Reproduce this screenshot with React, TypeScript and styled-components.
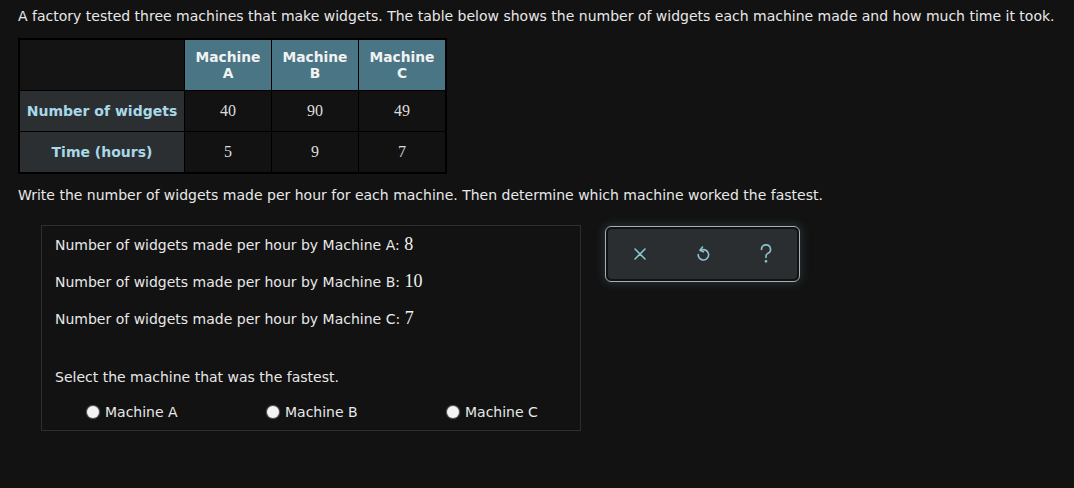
import React from 'react';
import styled, { createGlobalStyle } from 'styled-components';

const GlobalStyle = createGlobalStyle`
    html, body {
        margin: 0;
        padding: 0;
        background: #121212;
    }
    body {
        font-family: 'DejaVu Sans', Verdana, sans-serif;
        color: #e8e8e8;
    }
`;

const Page = styled.div`
    padding: 7px 18px 0 18px;
    font-size: 14px;
`;

const Para = styled.p`
    margin: 0;
    line-height: 18px;
`;

const Table = styled.table`
    margin-top: 13px;
    border-collapse: collapse;
    border: 2px solid #000;
`;

const HeadCell = styled.th<{ $blank?: boolean }>`
    width: ${p => (p.$blank ? '164px' : '86px')};
    height: 50px;
    padding: 0;
    border: 1px solid #000;
    background: ${p => (p.$blank ? '#141414' : '#4a7585')};
    color: #f2f2f2;
    font-size: 13.8px;
    font-weight: bold;
    line-height: 16px;
    text-align: center;
`;

const RowHead = styled.th`
    height: 40px;
    padding: 0;
    border: 1px solid #000;
    background: #2b2f32;
    color: #a9d8e8;
    font-size: 14px;
    font-weight: bold;
    text-align: center;
`;

const DataCell = styled.td`
    border: 1px solid #000;
    background: #121212;
    color: #dcdcdc;
    font-family: 'Liberation Serif', 'Times New Roman', serif;
    font-size: 16px;
    text-align: center;
`;

const TaskLine = styled(Para)`
    margin-top: 12px;
`;

const Work = styled.div`
    display: flex;
    align-items: flex-start;
    gap: 24px;
    margin-top: 21px;
    padding-left: 23px;
`;

const AnswerBox = styled.div`
    width: 538px;
    height: 204px;
    border: 1px solid #2e2e2e;
    display: flex;
    flex-direction: column;
`;

const RateList = styled.div`
    display: flex;
    flex-direction: column;
    gap: 19px;
    padding: 9px 0 0 13px;
`;

const RateLine = styled.div`
    height: 18px;
    line-height: 18px;
`;

const Value = styled.span`
    font-family: 'Liberation Serif', 'Times New Roman', serif;
    font-size: 18px;
    line-height: 18px;
    color: #f0f0f0;
`;

const Prompt = styled.div`
    margin-top: 41px;
    padding-left: 13px;
    line-height: 18px;
`;

const Choices = styled.div`
    display: grid;
    grid-template-columns: repeat(3, 180px);
    margin-top: 17px;
    padding-left: 45px;
`;

const Choice = styled.label`
    display: flex;
    align-items: center;
    gap: 6px;
    line-height: 18px;
`;

const Dot = styled.span`
    width: 12px;
    height: 12px;
    border-radius: 50%;
    background: #f4f4f4;
    box-shadow: 0 0 1px 1px rgba(255, 255, 255, 0.35);
`;

const Toolbar = styled.div`
    margin-top: 1px;
    width: 189px;
    height: 50px;
    border: 1px solid #a9aeb1;
    border-radius: 6px;
    box-shadow: 0 0 8px 2px rgba(70, 100, 110, 0.35);
    display: flex;
    padding: 2px;
`;

const ToolInner = styled.div`
    flex: 1;
    background: #2a2e31;
    border-radius: 4px;
    display: grid;
    grid-template-columns: repeat(3, 1fr);
    align-items: center;
    justify-items: center;
    color: #8cc2cd;
`;

const ToolButton = styled.span`
    display: flex;
    width: 22px;
    height: 22px;
    align-items: center;
    justify-content: center;
`;

const rates = [
    { name: 'A', value: '8' },
    { name: 'B', value: '10' },
    { name: 'C', value: '7' },
];

export default function App() {
    return (
        <Page>
            <GlobalStyle />
            <Para>
                A factory tested three machines that make widgets. The table below shows the number of
                widgets each machine made and how much time it took.
            </Para>
            <Table>
                <thead>
                    <tr>
                        <HeadCell $blank />
                        <HeadCell>Machine<br />A</HeadCell>
                        <HeadCell>Machine<br />B</HeadCell>
                        <HeadCell>Machine<br />C</HeadCell>
                    </tr>
                </thead>
                <tbody>
                    <tr>
                        <RowHead>Number of widgets</RowHead>
                        <DataCell>40</DataCell>
                        <DataCell>90</DataCell>
                        <DataCell>49</DataCell>
                    </tr>
                    <tr>
                        <RowHead>Time (hours)</RowHead>
                        <DataCell>5</DataCell>
                        <DataCell>9</DataCell>
                        <DataCell>7</DataCell>
                    </tr>
                </tbody>
            </Table>
            <TaskLine>
                Write the number of widgets made per hour for each machine. Then determine which machine
                worked the fastest.
            </TaskLine>
            <Work>
                <AnswerBox>
                    <RateList>
                        {rates.map(r => (
                            <RateLine key={r.name}>
                                Number of widgets made per hour by Machine {r.name}: <Value>{r.value}</Value>
                            </RateLine>
                        ))}
                    </RateList>
                    <Prompt>Select the machine that was the fastest.</Prompt>
                    <Choices>
                        {rates.map(r => (
                            <Choice key={r.name}>
                                <Dot />
                                Machine {r.name}
                            </Choice>
                        ))}
                    </Choices>
                </AnswerBox>
                <Toolbar>
                    <ToolInner>
                        <ToolButton>
                            <svg width="14" height="14" viewBox="0 0 14 14" fill="none" stroke="currentColor" strokeWidth="1.6" strokeLinecap="round">
                                <path d="M2 2 L12 12 M12 2 L2 12" />
                            </svg>
                        </ToolButton>
                        <ToolButton>
                            <svg width="16" height="18" viewBox="0 0 16 18" fill="none" stroke="currentColor" strokeWidth="1.6" strokeLinecap="round" strokeLinejoin="round">
                                <path d="M5.5 5.5 A5.2 5.2 0 1 1 3.2 9.5" />
                                <path d="M7.5 2 L5 5.3 L8.4 6.8" />
                            </svg>
                        </ToolButton>
                        <ToolButton>
                            <svg width="14" height="20" viewBox="0 0 14 20" fill="none" stroke="currentColor" strokeWidth="1.6" strokeLinecap="round">
                                <path d="M2.5 5.5 A4.5 4.5 0 1 1 8.5 9.6 C7.3 10.2 7 11 7 12.5 V13.5" />
                                <circle cx="7" cy="17.3" r="0.6" fill="currentColor" />
                            </svg>
                        </ToolButton>
                    </ToolInner>
                </Toolbar>
            </Work>
        </Page>
    );
}
